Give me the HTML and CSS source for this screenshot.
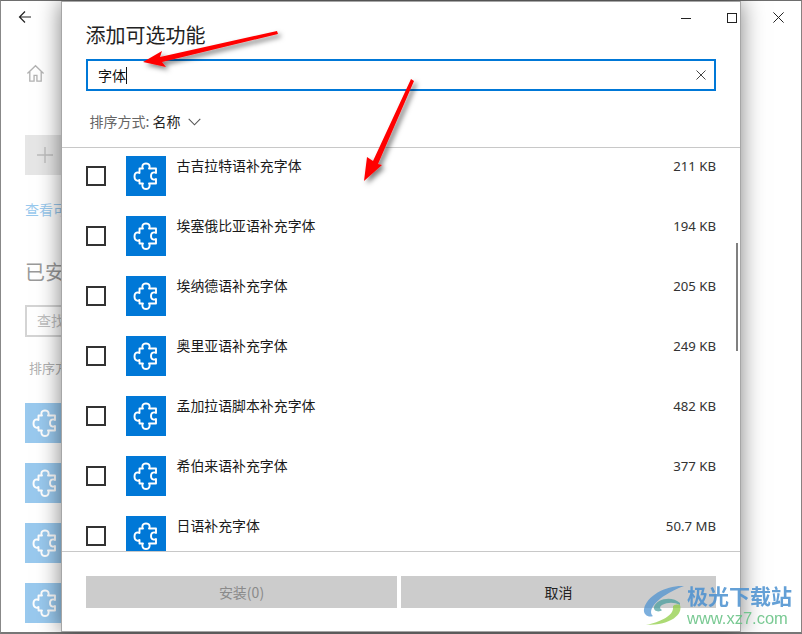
FILE: index.html
```html
<!DOCTYPE html>
<html lang="zh">
<head>
<meta charset="utf-8">
<title>添加可选功能</title>
<link rel="stylesheet" href="styles.css">
</head>
<body>
<svg class="defs" width="0" height="0" aria-hidden="true">
  <symbol id="puzzle" viewBox="0 0 40 40">
    <path d="M13.500 12.500H17c-1.200-1.500-1-5 3-5s4.200 3.500 3 5h7V17c-1.500-1-5-1-5 3s3.500 4 5 3v4.500h-7c1.200 1.500 1 5.500-3 5.500s-4.200-4-3-5.500h-3.500V24c-1.500 1.200-5 1-5-3.500s3.500-4.500 5-3.500z" fill="none" stroke="#fff" stroke-width="1.900" stroke-linejoin="round"/>
  </symbol>
</svg>

<div class="back-window">
  <svg class="back-arrow" width="14" height="14" viewBox="0 0 14 14"><path d="M13 7H1.500M7 1.500 1.500 7 7 12.500" fill="none" stroke="#222" stroke-width="1.200"/></svg>
  <svg class="home" width="19" height="19" viewBox="0 0 20 20"><path d="M1.500 10 10 1.800 18.500 10M4 8v10h4.500v-6h3v6H16V8" fill="none" stroke="#b3b3b3" stroke-width="1.400"/></svg>
  <div class="add-tile"><svg width="16" height="16" viewBox="0 0 16 16"><path d="M8 0v16M0 8h16" stroke="#bdbdbd" stroke-width="1.400"/></svg></div>
  <div class="back-link">查看可选功能历史记录</div>
  <h2 class="back-heading">已安装功能</h2>
  <div class="back-search">查找已安装的功能</div>
  <div class="back-sort">排序方式: 名称</div>
  <div class="back-tiles">
    <div class="back-tile"><svg class="puz"><use href="#puzzle"/></svg></div>
    <div class="back-tile"><svg class="puz"><use href="#puzzle"/></svg></div>
    <div class="back-tile"><svg class="puz"><use href="#puzzle"/></svg></div>
    <div class="back-tile"><svg class="puz"><use href="#puzzle"/></svg></div>
  </div>
  <svg class="back-close" width="11" height="11" viewBox="0 0 11 11"><path d="M.4.400l10.200 10.200M10.600.4.400 10.600" stroke="#222" stroke-width="1"/></svg>
</div>

<div class="dialog">
  <div class="win-controls">
    <span class="minimize"></span>
    <span class="maximize"></span>
  </div>
  <h1 class="title">添加可选功能</h1>
  <div class="search">
    <span class="search-text">字体</span><span class="caret"></span>
    <svg class="clear" width="10" height="10" viewBox="0 0 10 10"><path d="M.5.5l9 9M9.500.5l-9 9" stroke="#444" stroke-width="1"/></svg>
  </div>
  <div class="sort">
    <span class="sort-label">排序方式:</span>
    <span class="sort-value">名称</span>
    <svg class="chev" width="13" height="8" viewBox="0 0 13 8"><path d="M.7.800 6.500 6.800 12.300.8" fill="none" stroke="#555" stroke-width="1.100"/></svg>
  </div>
  <div class="list">
    <div class="row"><span class="check"></span><div class="tile"><svg class="puz"><use href="#puzzle"/></svg></div><span class="name">古吉拉特语补充字体</span><span class="size">211 KB</span></div>
    <div class="row"><span class="check"></span><div class="tile"><svg class="puz"><use href="#puzzle"/></svg></div><span class="name">埃塞俄比亚语补充字体</span><span class="size">194 KB</span></div>
    <div class="row"><span class="check"></span><div class="tile"><svg class="puz"><use href="#puzzle"/></svg></div><span class="name">埃纳德语补充字体</span><span class="size">205 KB</span></div>
    <div class="row"><span class="check"></span><div class="tile"><svg class="puz"><use href="#puzzle"/></svg></div><span class="name">奥里亚语补充字体</span><span class="size">249 KB</span></div>
    <div class="row"><span class="check"></span><div class="tile"><svg class="puz"><use href="#puzzle"/></svg></div><span class="name">孟加拉语脚本补充字体</span><span class="size">482 KB</span></div>
    <div class="row"><span class="check"></span><div class="tile"><svg class="puz"><use href="#puzzle"/></svg></div><span class="name">希伯来语补充字体</span><span class="size">377 KB</span></div>
    <div class="row"><span class="check"></span><div class="tile"><svg class="puz"><use href="#puzzle"/></svg></div><span class="name">日语补充字体</span><span class="size">50.7 MB</span></div>
    <span class="scrollbar"></span>
  </div>
  <div class="footer">
    <div class="btn btn-disabled">安装(0)</div>
    <div class="btn">取消</div>
  </div>
</div>

<svg class="arrows" width="802" height="634" viewBox="0 0 802 634">
  <defs><filter id="ds" x="-30%" y="-30%" width="160%" height="160%"><feDropShadow dx="3" dy="3" stdDeviation="2.500" flood-color="#000" flood-opacity=".5"/></filter></defs>
  <path filter="url(#ds)" fill="#f00" d="M143 62 162 51 160 57 277 31 278 34 162 62 166 67z"/>
  <path filter="url(#ds)" fill="#f00" d="M364 181 367 157 373 161 411 79 414 81 378 164 382 165z"/>
</svg>

<div class="watermark">
  <svg class="wm-logo" width="44" height="42" viewBox="0 0 44 42">
    <path d="M42 1C25 0 5 10 2 24c-1 6 5 9 9 7C5 26 13 12 42 1z" fill="#4a90d0" opacity=".85"/>
    <path d="M38 18C30 10 14 14 12 22c-1 4 5 6 8 3-2-1-3-3 0-5 6-3 12-3 18 0z" fill="#3f9a9a" opacity=".8"/>
    <path d="M38 20c3 9-8 20-34 20 14-3 28-9 27-18-.5-2 4-3 7-2z" fill="#8ccc40" opacity=".85"/>
  </svg>
  <div class="wm-text">
    <div class="wm-cn">极光下载站</div>
    <div class="wm-url">www.xz7.com</div>
  </div>
</div>
</body>
</html>
```
FILE: styles.css
```css
* { box-sizing: border-box; }
html, body { margin: 0; padding: 0; }
body {
  width: 802px;
  height: 634px;
  position: relative;
  overflow: hidden;
  background: #fff;
  font-family: "Noto Sans CJK SC", "Liberation Sans", sans-serif;
  color: #111;
}
.defs { position: absolute; }
.puz { width: 40px; height: 40px; display: block; }

/* background settings window */
.back-window {
  position: absolute;
  inset: 0;
  border-top: 1px solid #6e6e6e;
  border-left: 1px solid #888;
  border-right: 1px solid #8a8080;
  border-bottom: 2px solid #777;
  background: #fff;
}
.back-arrow { position: absolute; left: 17px; top: 9px; }
.home { position: absolute; left: 25px; top: 63px; }
.back-close { position: absolute; left: 772px; top: 11px; }
.add-tile {
  position: absolute; left: 24px; top: 134px;
  width: 40px; height: 40px;
  background: #e6e6e6;
  padding: 12px;
}
.add-tile svg { display: block; }
.back-link { position: absolute; left: 24px; top: 198px; font-size: 14px; line-height: 20px; color: #99c9ee; white-space: nowrap; }
.back-heading { position: absolute; left: 24px; top: 257px; margin: 0; font-size: 20px; font-weight: 400; line-height: 28px; color: #9a9a9a; white-space: nowrap; }
.back-search { position: absolute; left: 24px; top: 304px; width: 130px; height: 32px; border: 2px solid #d4d4d4; padding-left: 10px; font-size: 14px; line-height: 26px; color: #c0c0c0; white-space: nowrap; }
.back-sort { position: absolute; left: 28px; top: 357px; font-size: 13px; line-height: 20px; color: #b0b0b0; white-space: nowrap; }
.back-tiles { position: absolute; left: 24px; top: 402px; display: flex; flex-direction: column; gap: 20px; }
.back-tile { width: 40px; height: 40px; background: #99c9ee; }

/* dialog */
.dialog {
  position: absolute;
  left: 61px; top: 1px;
  width: 680px; height: 631px;
  background: #fff;
  border: 1px solid #a6a6a6;
  box-shadow: 0 0 22px rgba(0,0,0,.5);
  display: flex;
  flex-direction: column;
}
.win-controls { position: absolute; right: 3px; top: 11px; display: flex; align-items: center; gap: 36px; }
.minimize { width: 10px; height: 1px; background: #222; }
.maximize { width: 10px; height: 10px; border: 1px solid #222; }
.title {
  margin: 19px 0 0 23.500px;
  font-size: 20px; font-weight: 400; line-height: 28px; color: #222;
}
.search {
  margin: 10px 24px 0 24px;
  height: 32px;
  border: 2px solid #0078d7;
  display: flex; align-items: center;
  padding: 0 8px 0 10px;
  font-size: 14px;
}
.caret { width: 1px; height: 17px; background: #111; }
.clear { margin-left: auto; }
.sort { margin: 19px 0 0 27.500px; display: flex; align-items: center; font-size: 14px; line-height: 22px; height: 22px; }
.sort-label { color: #666; margin-right: 3px; }
.sort-value { color: #222; }
.chev { margin: 2px 0 0 8px; }
.list {
  margin-top: 15px;
  border-top: 1px solid #c8c8c8;
  height: 404px;
  overflow: hidden;
  position: relative;
  padding: 8px 24px 0 24px;
  display: flex; flex-direction: column; gap: 20px;
}
.row { display: flex; height: 40px; flex: none; position: relative; }
.check { width: 20px; height: 20px; margin: 10px 20px 0 0; border: 2px solid #333; flex: none; }
.tile { width: 40px; height: 40px; background: #0078d7; flex: none; }
.name { margin: -1px 0 0 10.500px; font-size: 13.900px; line-height: 20px; height: 20px; color: #1a1a1a; }
.size { margin: 0 0 0 auto; font-size: 13.200px; line-height: 20px; height: 20px; color: #333; font-family: "Noto Sans", sans-serif; }
.scrollbar { position: absolute; right: 2px; top: 95px; width: 2px; height: 108px; background: #808080; }
.footer {
  border-top: 1px solid #c8c8c8;
  flex: 1;
  display: flex; gap: 4px;
  padding: 24px 24px 0 24px;
}
.btn { height: 32px; background: #ccc; text-align: center; font-size: 14px; line-height: 32px; color: #222; flex: 315 0 0; }
.btn-disabled { flex: 311 0 0; color: #8a8a8a; }

/* annotation overlay */
.arrows { position: absolute; left: 0; top: 0; pointer-events: none; }
.watermark { position: absolute; left: 642px; top: 584px; display: flex; gap: 1px; align-items: flex-start; opacity: .85; }
.wm-logo { margin-top: 1px; }
.wm-cn { font-size: 21px; font-weight: 700; line-height: 22px; height: 22px; color: #4a90d0; white-space: nowrap; }
.wm-url { margin-top: 3px; font-family: "Liberation Sans", sans-serif; font-size: 16.500px; line-height: 18px; height: 18px; color: #62c080; white-space: nowrap; }
```
